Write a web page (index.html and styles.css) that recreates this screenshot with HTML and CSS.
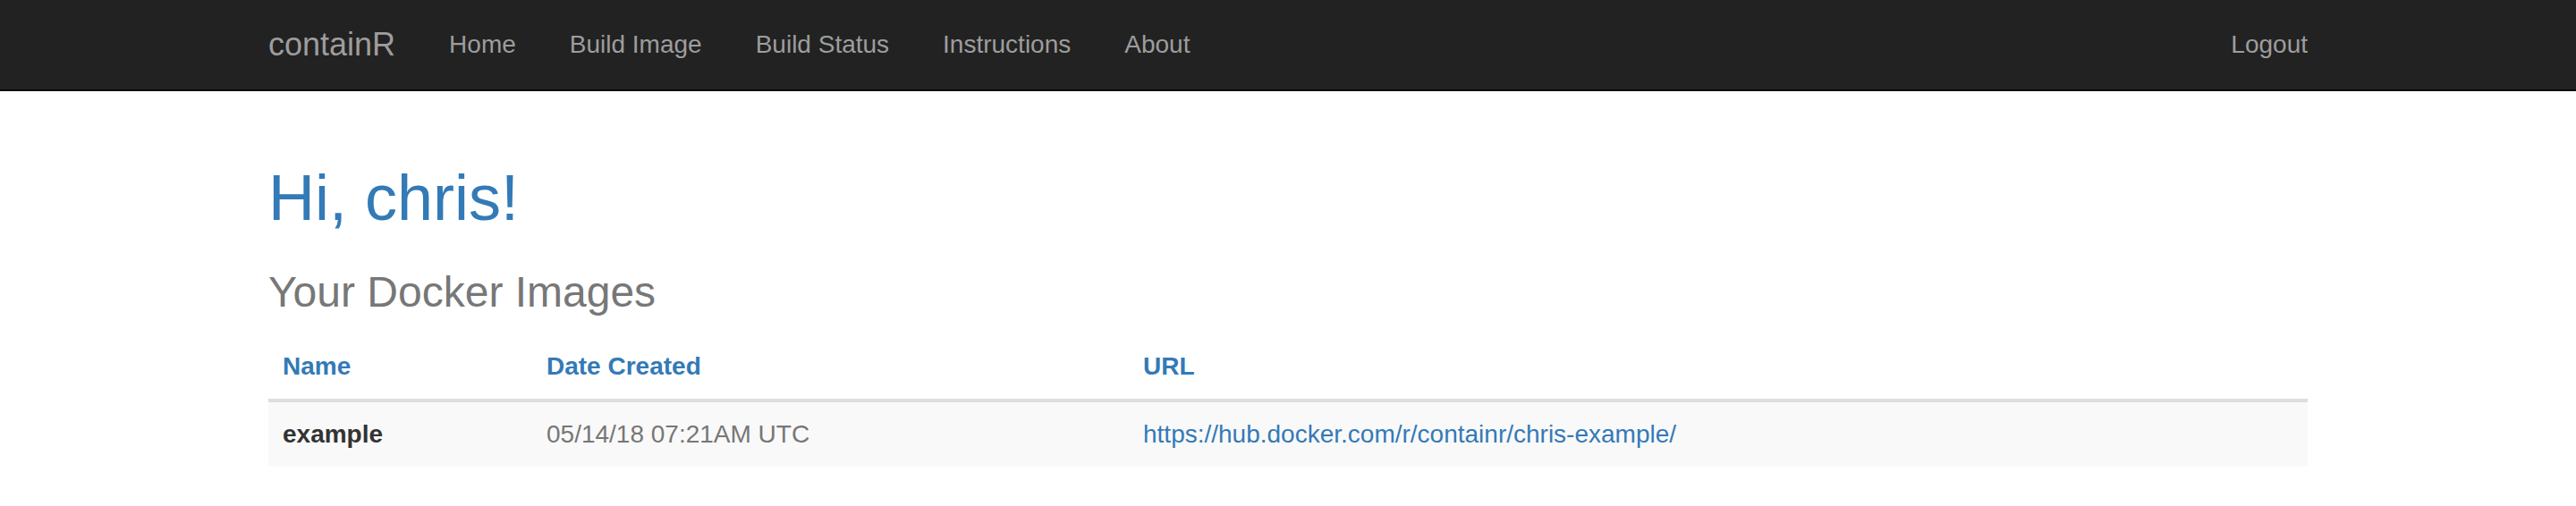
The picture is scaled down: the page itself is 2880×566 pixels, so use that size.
FILE: index.html
```html
<!DOCTYPE html>
<html lang="en">
<head>
<meta charset="utf-8">
<title>containR</title>
<link rel="stylesheet" href="styles.css">
</head>
<body>
<nav class="navbar">
  <div class="container nav-inner">
    <a class="brand" href="#">containR</a>
    <ul class="nav">
      <li><a href="#">Home</a></li>
      <li><a href="#">Build Image</a></li>
      <li><a href="#">Build Status</a></li>
      <li><a href="#">Instructions</a></li>
      <li><a href="#">About</a></li>
    </ul>
    <ul class="nav nav-right">
      <li><a href="#">Logout</a></li>
    </ul>
  </div>
</nav>
<main class="container content">
  <h1 class="greeting">Hi, chris!</h1>
  <h3 class="subtitle">Your Docker Images</h3>
  <table class="images">
    <colgroup>
      <col class="col-name">
      <col class="col-date">
      <col class="col-url">
    </colgroup>
    <thead>
      <tr>
        <th>Name</th>
        <th>Date Created</th>
        <th>URL</th>
      </tr>
    </thead>
    <tbody>
      <tr>
        <td class="cell-name">example</td>
        <td class="cell-date">05/14/18 07:21AM UTC</td>
        <td><a href="#">https://hub.docker.com/r/containr/chris-example/</a></td>
      </tr>
    </tbody>
  </table>
</main>
</body>
</html>
```

FILE: styles.css
```css
* { box-sizing: border-box; }

html, body {
  margin: 0;
  padding: 0;
  background: #fff;
}

body {
  font-family: "Liberation Sans", Arial, Helvetica, sans-serif;
  font-size: 28px;
  line-height: 1.42857;
  color: #333;
}

a { text-decoration: none; color: #337ab7; }

.container {
  width: 2340px;
  margin: 0 auto;
  padding: 0 30px;
}

.navbar {
  background: #222;
  border-bottom: 2px solid #080808;
  height: 102px;
  margin-bottom: 40px;
}

.nav-inner {
  display: flex;
  align-items: flex-start;
  height: 100px;
}

.brand {
  display: block;
  height: 100px;
  padding: 30px 30px;
  margin-left: -30px;
  font-size: 36px;
  line-height: 40px;
  color: #9d9d9d;
}

.nav {
  list-style: none;
  margin: 0;
  padding: 0;
  display: flex;
}

.nav a {
  display: block;
  padding: 30px 30px;
  line-height: 40px;
  color: #9d9d9d;
}

.nav-right {
  margin-left: auto;
  margin-right: -30px;
}

.content {
  display: flow-root;
}

.greeting {
  margin: 40px 0 20px;
  font-size: 72px;
  line-height: 1.1;
  font-weight: 500;
  color: #337ab7;
}

.subtitle {
  margin: 40px 0 20px;
  font-size: 48px;
  line-height: 1.1;
  font-weight: 500;
  color: #777;
}

.images {
  width: 100%;
  border-collapse: collapse;
  border-spacing: 0;
  table-layout: fixed;
}

.col-name { width: 295px; }
.col-date { width: 667px; }

.images th,
.images td {
  padding: 16px;
  line-height: 40px;
  text-align: left;
  vertical-align: top;
}

.images th {
  font-weight: bold;
  color: #337ab7;
  border-bottom: 4px solid #ddd;
}

.images tbody tr {
  background: #f9f9f9;
}

.cell-name { font-weight: bold; color: #333; }
.cell-date { color: #777; }
```
